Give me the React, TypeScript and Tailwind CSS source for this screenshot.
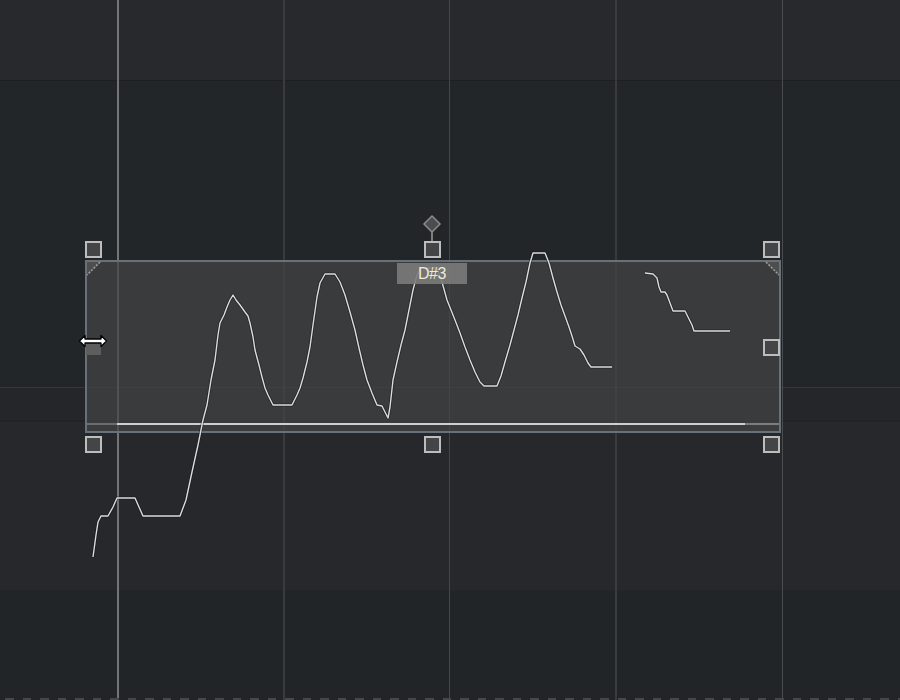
import React from 'react';

// pitch curve traced from the editor, in canvas pixels
const curveA: [number, number][] = [
  [93, 557], [96, 535], [98, 522], [101, 516], [108, 516], [113, 507], [117, 498], [135, 498],
  [143, 516], [180, 516], [186, 500], [192, 472], [198, 445], [203, 420], [207, 405], [211, 380],
  [215, 360], [218, 335], [220, 323], [224, 315], [227, 307], [230, 300], [233, 295], [236, 300],
  [240, 305], [245, 312], [248, 316], [250, 323], [253, 337], [255, 350], [259, 365], [262, 377],
  [265, 388], [268, 395], [273, 405], [292, 405], [297, 395], [300, 388], [303, 378], [307, 362],
  [310, 347], [313, 325], [317, 297], [320, 283], [325, 274], [335, 274], [340, 282], [345, 295],
  [350, 312], [355, 330], [359, 348], [363, 365], [367, 380], [372, 393], [377, 405], [382, 406],
  [386, 414], [388, 418], [390, 407], [393, 380], [397, 362], [401, 345], [405, 330], [409, 310],
  [413, 290], [417, 275], [421, 268], [437, 268], [442, 282], [447, 300], [451, 310], [455, 320],
  [460, 333], [465, 347], [470, 360], [475, 372], [480, 382], [484, 386], [497, 386], [501, 376],
  [505, 362], [510, 345], [514, 330], [518, 315], [522, 298], [526, 282], [530, 263], [533, 253],
  [545, 253], [549, 263], [553, 278], [557, 292], [561, 305], [565, 316], [569, 327], [572, 336],
  [575, 346], [580, 349], [584, 355], [588, 363], [591, 367], [612, 367],
];

const curveB: [number, number][] = [
  [645, 273], [653, 274], [657, 278], [659, 287], [661, 292], [665, 292], [667, 295], [670, 303],
  [673, 311], [685, 311], [688, 317], [692, 325], [694, 331], [730, 331],
];

const toPts = (p: [number, number][]) => p.map(([x, y]) => `${x},${y}`).join(' ');

function Handle() {
  return <div className="w-[17px] h-[17px] shrink-0 border-2 border-[#bdbdbd] bg-[#444546]" />;
}

export default function App() {
  return (
    <div className="relative w-[900px] h-[700px] overflow-hidden bg-[#222528] font-['Liberation_Sans',Arial,sans-serif]">
      {/* piano-roll rows */}
      <div className="flex flex-col h-full">
        <div className="h-[80px] bg-[#27292d]" />
        <div className="h-[1px] bg-[#1c1e21]" />
        <div className="h-[306px] bg-[#232629]" />
        <div className="h-[1px] bg-[#35373b]" />
        <div className="h-[32px] bg-[#242629]" />
        <div className="h-[2px] bg-[#212326]" />
        <div className="h-[168px] bg-[#26282c]" />
        <div className="flex-1 bg-[#222528]" />
      </div>

      {/* bar / beat lines */}
      <div className="absolute inset-0 flex pl-[117px]">
        <div className="w-[2px] bg-[#727477]" />
        <div className="w-[164px]" />
        <div className="w-[2px] bg-[#393b3f]" />
        <div className="w-[164px]" />
        <div className="w-[1px] bg-[#45474b]" />
        <div className="w-[165px]" />
        <div className="w-[2px] bg-[#393b3f]" />
        <div className="w-[165px]" />
        <div className="w-[1px] bg-[#4a4c50]" />
      </div>

      {/* dashed bottom ruler */}
      <div className="absolute left-0 right-0 bottom-0 h-[2px] flex gap-[9px] pl-[5px]">
        {Array.from({ length: 52 }).map((_, i) => (
          <div key={i} className="w-[8.5px] shrink-0 h-full bg-[#45474b]" />
        ))}
      </div>

      {/* note blob */}
      <div className="absolute left-[85px] top-[260px] w-[696px] h-[173px] border-2 border-[#68707a] bg-[#444444]/70 flex flex-col justify-end pb-[6px]">
        <div className="flex h-[2px]">
          <div className="w-[30px] bg-[#6c6c6c]" />
          <div className="w-[628px] bg-[#cfcfcf]" />
          <div className="flex-1 bg-[#7d7d7d]" />
        </div>
      </div>

      <svg className="absolute left-0 top-0" width="900" height="700">
        {/* corner triangles */}
        <polygon points="87,262 101,262 87,276" fill="#4e4e4e" />
        <line x1="100" y1="262" x2="87" y2="275" stroke="#a0a0a0" strokeWidth="1.5" strokeDasharray="2 1.5" />
        <polygon points="765,262 779,262 779,276" fill="#4e4e4e" />
        <line x1="766" y1="262" x2="779" y2="275" stroke="#a0a0a0" strokeWidth="1.5" strokeDasharray="2 1.5" />

        {/* pitch curves */}
        <polyline points={toPts(curveA)} fill="none" stroke="#111" strokeOpacity="0.5" strokeWidth="3" strokeLinejoin="round" />
        <polyline points={toPts(curveA)} fill="none" stroke="#dcdcdc" strokeWidth="1.4" strokeLinejoin="round" />
        <polyline points={toPts(curveB)} fill="none" stroke="#111" strokeOpacity="0.5" strokeWidth="3" strokeLinejoin="round" />
        <polyline points={toPts(curveB)} fill="none" stroke="#dcdcdc" strokeWidth="1.4" strokeLinejoin="round" />

        {/* pitch-drift diamond */}
        <line x1="432" y1="232" x2="432" y2="241" stroke="#9a9a9a" strokeWidth="1.5" />
        <polygon points="432,216 440,224 432,232 424,224" fill="#4b4c4e" stroke="#8c8c8c" strokeWidth="1.5" />
      </svg>

      {/* note label */}
      <div className="absolute left-[397px] top-[263px] w-[70px] h-[21px] bg-[#7b7b7b]/90 flex items-center justify-center text-[16px] leading-none text-[#ecebd4] tracking-[-0.5px]">
        D#3
      </div>

      {/* resize handles */}
      <div className="absolute left-[85px] top-[241px] w-[695px] h-[212px] flex flex-col justify-between">
        <div className="flex justify-between">
          <Handle />
          <Handle />
          <Handle />
        </div>
        <div className="flex justify-between">
          <div className="w-[17px] h-[17px] p-px">
            <div className="w-full h-full bg-[#5e5e5e]" />
          </div>
          <Handle />
        </div>
        <div className="flex justify-between">
          <Handle />
          <Handle />
          <Handle />
        </div>
      </div>

      {/* resize cursor */}
      <svg className="absolute left-[78px] top-[333px]" width="30" height="16" viewBox="0 0 30 16">
        <path
          d="M1.5 8 L7 2.5 L7 6 L23 6 L23 2.5 L28.5 8 L23 13.5 L23 10 L7 10 L7 13.5 Z"
          fill="#ffffff"
          stroke="#000000"
          strokeWidth="1.3"
          strokeLinejoin="round"
        />
      </svg>
    </div>
  );
}
